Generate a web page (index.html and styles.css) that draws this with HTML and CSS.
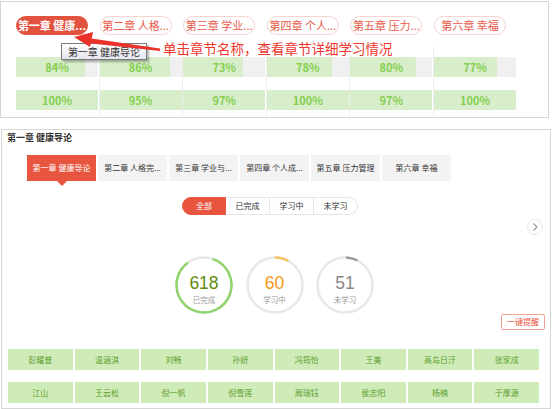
FILE: index.html
```html
<!DOCTYPE html>
<html lang="zh-CN">
<head>
<meta charset="utf-8">
<title>学习情况</title>
<link rel="stylesheet" href="styles.css">
</head>
<body>
<section class="top-panel">
  <div class="pills">
    <span class="pill active">第一章 健康...</span>
    <span class="pill">第二章 人格...</span>
    <span class="pill">第三章 学业...</span>
    <span class="pill">第四章 个人...</span>
    <span class="pill">第五章 压力...</span>
    <span class="pill">第六章 幸福</span>
  </div>
  <div class="bars">
    <div class="bar-col">
      <div class="bar"><div class="fill" style="width:84%"></div><span>84%</span></div>
      <div class="bar full"><span>100%</span></div>
    </div>
    <div class="bar-col">
      <div class="bar"><div class="fill" style="width:86%"></div><span>86%</span></div>
      <div class="bar full"><span>95%</span></div>
    </div>
    <div class="bar-col">
      <div class="bar"><div class="fill" style="width:73%"></div><span>73%</span></div>
      <div class="bar full"><span>97%</span></div>
    </div>
    <div class="bar-col">
      <div class="bar"><div class="fill" style="width:79%"></div><span>78%</span></div>
      <div class="bar full"><span>100%</span></div>
    </div>
    <div class="bar-col">
      <div class="bar"><div class="fill" style="width:80%"></div><span>80%</span></div>
      <div class="bar full"><span>97%</span></div>
    </div>
    <div class="bar-col last">
      <div class="bar"><div class="fill" style="width:77%"></div><span>77%</span></div>
      <div class="bar full"><span>100%</span></div>
    </div>
  </div>
  <div class="tooltip">第一章 健康导论</div>
  <svg class="arrow" width="170" height="60" viewBox="0 0 170 60">
    <polygon points="74,37 93,32 90,47" fill="#e8322a"/>
    <polygon points="88,38 160,48.5 160,51 87,43" fill="#e8322a"/>
  </svg>
  <div class="hint">单击章节名称，查看章节详细学习情况</div>
</section>

<section class="detail-panel">
  <h2 class="title">第一章 健康导论</h2>
  <div class="tabs">
    <div class="tab active">第一章 健康导论</div>
    <div class="tab">第二章 人格完...</div>
    <div class="tab">第三章 学业与...</div>
    <div class="tab">第四章 个人成...</div>
    <div class="tab">第五章 压力管理</div>
    <div class="tab">第六章 幸福</div>
  </div>
  <div class="filter">
    <span class="seg active">全部</span>
    <span class="seg">已完成</span>
    <span class="seg">学习中</span>
    <span class="seg">未学习</span>
  </div>
  <button class="next" aria-label="下一页">
    <svg width="14" height="14" viewBox="0 0 14 14"><path d="M5.5 3.5 L9 7 L5.5 10.5" fill="none" stroke="#9a9a9a" stroke-width="1.2"/></svg>
  </button>
  <div class="stats">
    <div class="ring">
      <svg width="58" height="58" viewBox="0 0 58 58">
        <circle cx="29" cy="29" r="27.5" fill="none" stroke="#e8e8e8" stroke-width="2.5"/>
        <circle cx="29" cy="29" r="27.5" fill="none" stroke="#8fd56c" stroke-width="2.5" stroke-dasharray="147 1000" transform="rotate(-72 29 29)"/>
      </svg>
      <span class="num green">618</span>
      <span class="lbl">已完成</span>
    </div>
    <div class="ring">
      <svg width="58" height="58" viewBox="0 0 58 58">
        <circle cx="29" cy="29" r="27.5" fill="none" stroke="#e8e8e8" stroke-width="2.5"/>
        <circle cx="29" cy="29" r="27.5" fill="none" stroke="#f7c557" stroke-width="2.5" stroke-dasharray="14 1000" transform="rotate(-90 29 29)"/>
      </svg>
      <span class="num orange">60</span>
      <span class="lbl">学习中</span>
    </div>
    <div class="ring">
      <svg width="58" height="58" viewBox="0 0 58 58">
        <circle cx="29" cy="29" r="27.5" fill="none" stroke="#e8e8e8" stroke-width="2.5"/>
        <circle cx="29" cy="29" r="27.5" fill="none" stroke="#9c9c9c" stroke-width="2.5" stroke-dasharray="12 1000" transform="rotate(-88 29 29)"/>
      </svg>
      <span class="num gray">51</span>
      <span class="lbl">未学习</span>
    </div>
  </div>
  <div class="actions">
    <button class="remind">一键提醒</button>
  </div>
  <div class="names">
    <div class="name">彭耀普</div>
    <div class="name">温涵淇</div>
    <div class="name">刘畅</div>
    <div class="name">孙妍</div>
    <div class="name">冯筠怡</div>
    <div class="name">王美</div>
    <div class="name">高岛日汗</div>
    <div class="name">张家成</div>
    <div class="name">江山</div>
    <div class="name">王云松</div>
    <div class="name">倪一帆</div>
    <div class="name">倪雪莲</div>
    <div class="name">周瑞钰</div>
    <div class="name">侯忠阳</div>
    <div class="name">杨楠</div>
    <div class="name">于厚源</div>
  </div>
</section>
</body>
</html>
```

FILE: styles.css
```css
* { box-sizing: border-box; }

html, body {
  margin: 0;
  padding: 0;
  background: #ffffff;
}

body {
  width: 554px;
  height: 409px;
  overflow: hidden;
  font-family: "Noto Sans CJK SC", "Noto Sans", sans-serif;
  color: #333;
}

/* ---------- top panel ---------- */
.top-panel {
  position: relative;
  margin-top: 1px;
  width: 549px;
  height: 117px;
  border: 1px solid #d6d6d6;
  background: #fff;
}

.pills {
  display: flex;
  gap: 11.6px;
  padding: 14px 0 0 15px;
}

.pill {
  width: 72px;
  height: 19px;
  border: 1px solid #f5d3ce;
  border-radius: 10px;
  font-size: 11px;
  line-height: 17px;
  text-align: center;
  color: #e85a4a;
  white-space: nowrap;
  background: #fff;
}

.pill.active {
  background: #e2533f;
  border-color: #e2533f;
  color: #fff;
  font-weight: bold;
}

.bars {
  display: flex;
  margin: 11px 0 0 15px;
}

.bar-col {
  width: 83.6px;
  height: 70px;
  padding-top: 11px;
  border-right: 1px solid #efefef;
  display: flex;
  flex-direction: column;
  gap: 13px;
}

.bar-col.last { border-right: none; }

.bar {
  position: relative;
  width: 82px;
  height: 20px;
  background: #f0f0f0;
}

.bar .fill {
  height: 100%;
  background: #d8edca;
}

.bar.full { background: #d8edca; }

.bar span {
  position: absolute;
  inset: 0;
  text-align: center;
  font-size: 11px;
  line-height: 20px;
  font-weight: bold;
  color: #84cf4f;
}

.tooltip {
  position: absolute;
  left: 60px;
  top: 41px;
  width: 86px;
  height: 17px;
  border: 1px solid #7a7a7a;
  background: linear-gradient(#ffffff, #e4e5ee);
  box-shadow: 2px 2px 2px rgba(0, 0, 0, 0.3);
  font-size: 10px;
  line-height: 15px;
  text-align: center;
  color: #333;
  white-space: nowrap;
}

.arrow {
  position: absolute;
  left: -1px;
  top: -2px;
}

.hint {
  position: absolute;
  left: 162px;
  top: 37px;
  font-size: 13.5px;
  line-height: 18px;
  color: #f0352d;
  white-space: nowrap;
}

/* ---------- detail panel ---------- */
.detail-panel {
  position: relative;
  margin: 11px 0 0 1px;
  width: 550px;
  height: 280px;
  border: 1px solid #d6d6d6;
  background: #fff;
}

.title {
  margin: 0;
  padding: 1px 0 0 5px;
  font-size: 9px;
  line-height: 14px;
  font-weight: bold;
  color: #333;
}

.tabs {
  display: flex;
  gap: 2px;
  margin-top: 10px;
  padding-left: 25px;
}

.tab {
  position: relative;
  width: 69px;
  height: 26px;
  background: #f3f3f3;
  font-size: 8px;
  line-height: 26px;
  text-align: center;
  color: #333;
  white-space: nowrap;
}

.tab.active {
  background: #e8553f;
  color: #fff;
}

.tab.active::after {
  content: "";
  position: absolute;
  left: 30px;
  bottom: -5px;
  border-left: 5px solid transparent;
  border-right: 5px solid transparent;
  border-top: 5px solid #e8553f;
}

.filter {
  display: flex;
  margin: 16px 0 0 180px;
  width: 177px;
}

.seg {
  width: 44px;
  height: 18px;
  border: 1px solid #e6e6e6;
  border-left: none;
  font-size: 8px;
  line-height: 16px;
  text-align: center;
  color: #333;
}

.seg:first-child {
  border-left: 1px solid #e6e6e6;
  border-radius: 9px 0 0 9px;
}

.seg:last-child { border-radius: 0 9px 9px 0; }

.seg.active {
  background: #e8553f;
  border-color: #e8553f;
  color: #fff;
}

.next {
  position: absolute;
  left: 525px;
  top: 89px;
  width: 16px;
  height: 16px;
  padding: 0;
  border: 1px solid #e8e8e8;
  border-radius: 50%;
  background: #fff;
  display: flex;
  align-items: center;
  justify-content: center;
}

.stats {
  display: flex;
  gap: 12.5px;
  margin: 41px 0 0 173px;
}

.ring {
  position: relative;
  width: 58px;
  height: 58px;
  display: flex;
  flex-direction: column;
  align-items: center;
  justify-content: center;
}

.ring svg {
  position: absolute;
  left: 0;
  top: 0;
}

.num {
  position: relative;
  font-family: "Liberation Sans", sans-serif;
  font-size: 17.5px;
  line-height: normal;
  margin-top: 7px;
}

.num.green { color: #5f8c10; }
.num.orange { color: #f39a12; }
.num.gray { color: #888; }

.lbl {
  position: relative;
  font-size: 7.5px;
  line-height: normal;
  color: #999;
}

.actions {
  display: flex;
  justify-content: flex-end;
  padding-right: 5px;
}

.remind {
  width: 44px;
  height: 16px;
  padding: 0;
  border: 1px solid #f2a093;
  border-radius: 2px;
  background: #fff;
  font-family: "Noto Sans CJK SC", sans-serif;
  font-size: 8px;
  line-height: 14px;
  color: #e8553f;
}

.names {
  display: grid;
  grid-template-columns: repeat(8, 1fr);
  column-gap: 2px;
  row-gap: 12px;
  width: 531px;
  margin: 19px 0 0 6px;
}

.name {
  height: 21px;
  background: #cfebb8;
  font-size: 8px;
  line-height: 21px;
  text-align: center;
  color: #5e9e2c;
}
```
